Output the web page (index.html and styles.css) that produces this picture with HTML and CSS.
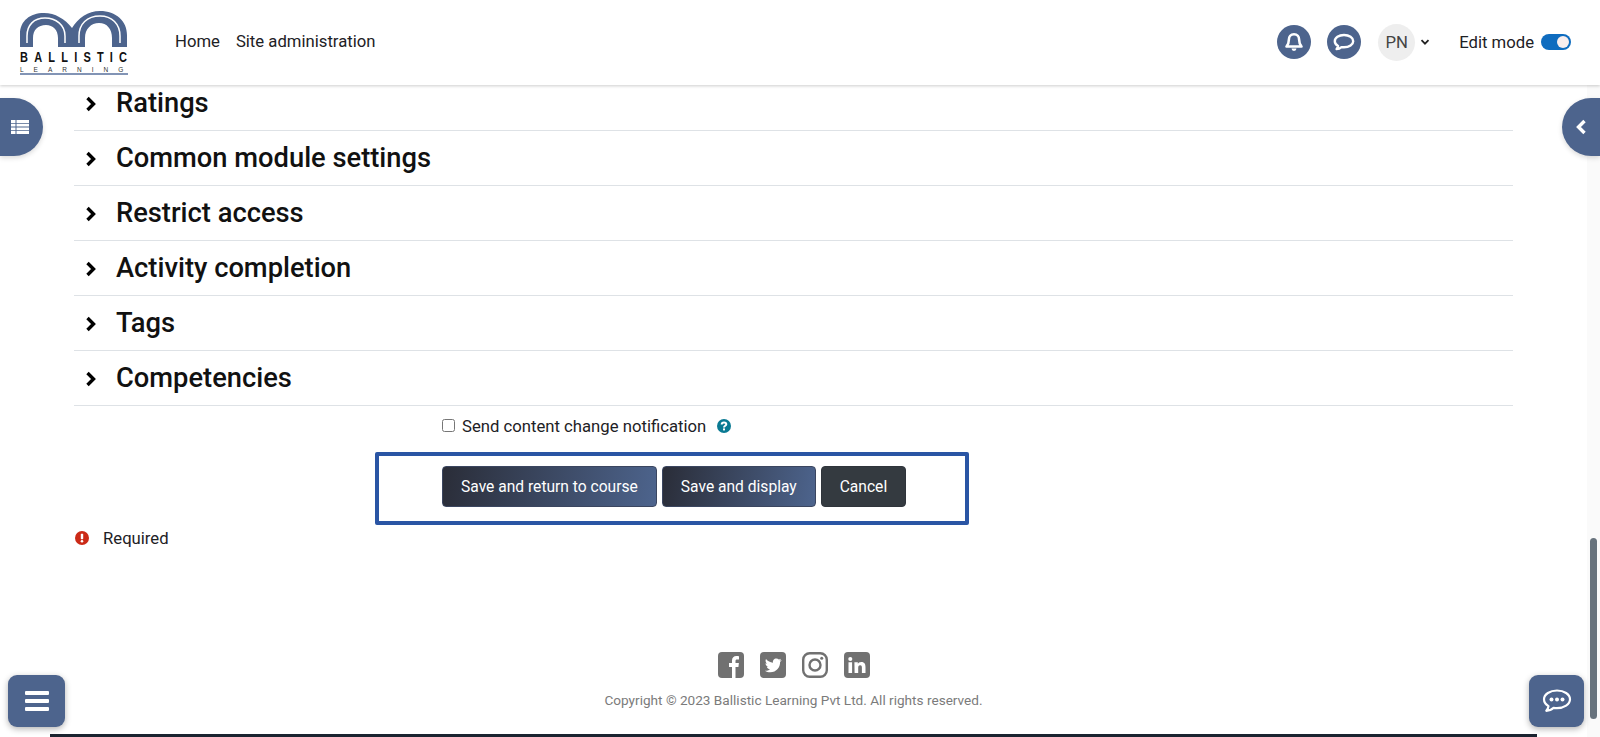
FILE: index.html
```html
<!DOCTYPE html>
<html lang="en">
<head>
<meta charset="utf-8">
<title>Ballistic Learning</title>
<link rel="stylesheet" href="styles.css">
</head>
<body>
<header class="topbar">
  <div class="logo">
    <svg class="logo-arches" viewBox="0 -1 108 38" width="108" height="38">
      <path fill="#4d648d" d="M0 37V24C0 11 10 3 24 3C35 3 45 9 52 18C58 8 68 1 80 1C96 1 107 11 107 25V37H92V28C92 19 87 13 79 13C71 13 65 19 65 28V37H38V28C38 20 33 15 26 15C18 15 13 20 13 28V37Z"/>
      <path fill="none" stroke="#fff" stroke-width="1.500" d="M7 33V26C7 15 14 8 25 8C36 8 45 15 45 26V33"/>
      <path fill="none" stroke="#fff" stroke-width="1.500" d="M59 33V26C59 14 67 6 80 6C92 6 100 14 100 26V33"/>
    </svg>
    <div class="logo-main">BALLISTIC</div>
    <div class="logo-sub">LEARNING</div>
  </div>
  <nav class="nav">
    <a class="nav-link">Home</a>
    <a class="nav-link">Site administration</a>
  </nav>
  <div class="usernav">
    <span class="round-btn">
      <svg viewBox="0 0 24 24" width="22" height="22"><path fill="none" stroke="#fff" stroke-width="2.800" stroke-linejoin="round" d="M12 3.500c-3.600 0-5.600 2.600-5.600 6 0 4.200-1 5.600-2.600 7.400h16.400c-1.600-1.800-2.600-3.200-2.600-7.400 0-3.400-2-6-5.600-6z"/><path fill="#fff" d="M9.300 19h5.400a2.700 2.700 0 0 1-5.400 0z"/></svg>
    </span>
    <span class="round-btn chat-btn">
      <svg viewBox="0 0 24 24" width="24" height="24"><path fill="none" stroke="#fff" stroke-width="2.400" stroke-linejoin="round" d="M12 5C6.800 5 2.800 7.700 2.800 11.200c0 2 1.300 3.700 3.300 4.800-.2 1.200-.8 2.200-1.500 3 2 0 3.700-.8 4.900-1.900.8.100 1.600.2 2.500.2 5.200 0 9.200-2.700 9.200-6.100S17.200 5 12 5z"/></svg>
    </span>
    <span class="avatar">PN</span>
    <svg class="caret" viewBox="0 0 10 10" width="10" height="10"><path fill="none" stroke="#222" stroke-width="1.800" d="M1.500 3.200L5 6.700l3.500-3.500"/></svg>
    <span class="edit-label">Edit mode</span>
    <span class="switch"><span class="knob"></span></span>
  </div>
</header>

<main class="content">
  <section class="acc-row"><svg class="chev" viewBox="0 0 12 16" width="12" height="16"><path fill="none" stroke="#000" stroke-width="3.400" d="M2.500 2l6 6-6 6"/></svg><h3 class="acc-title">Ratings</h3></section>
  <section class="acc-row"><svg class="chev" viewBox="0 0 12 16" width="12" height="16"><path fill="none" stroke="#000" stroke-width="3.400" d="M2.500 2l6 6-6 6"/></svg><h3 class="acc-title">Common module settings</h3></section>
  <section class="acc-row"><svg class="chev" viewBox="0 0 12 16" width="12" height="16"><path fill="none" stroke="#000" stroke-width="3.400" d="M2.500 2l6 6-6 6"/></svg><h3 class="acc-title">Restrict access</h3></section>
  <section class="acc-row"><svg class="chev" viewBox="0 0 12 16" width="12" height="16"><path fill="none" stroke="#000" stroke-width="3.400" d="M2.500 2l6 6-6 6"/></svg><h3 class="acc-title">Activity completion</h3></section>
  <section class="acc-row"><svg class="chev" viewBox="0 0 12 16" width="12" height="16"><path fill="none" stroke="#000" stroke-width="3.400" d="M2.500 2l6 6-6 6"/></svg><h3 class="acc-title">Tags</h3></section>
  <section class="acc-row"><svg class="chev" viewBox="0 0 12 16" width="12" height="16"><path fill="none" stroke="#000" stroke-width="3.400" d="M2.500 2l6 6-6 6"/></svg><h3 class="acc-title">Competencies</h3></section>

  <div class="notify">
    <span class="checkbox"></span>
    <span class="notify-label">Send content change notification</span>
    <svg class="help" viewBox="0 0 14 14" width="14" height="14"><circle cx="7" cy="7" r="7" fill="#0a7a93"/><path fill="none" stroke="#fff" stroke-width="2" d="M4.700 5.500c0-1.400 1-2.100 2.300-2.100s2.300.7 2.300 1.900c0 1.500-2.300 1.500-2.300 3.100"/><rect x="6" y="9.400" width="2" height="2" fill="#fff"/></svg>
  </div>

  <div class="actions-wrap">
    <div class="actions">
      <button class="btn btn-grad">Save and return to course</button>
      <button class="btn btn-grad">Save and display</button>
      <button class="btn btn-dark">Cancel</button>
    </div>
  </div>

  <div class="required">
    <svg viewBox="0 0 14 14" width="14" height="14"><circle cx="7" cy="7" r="7" fill="#cb2a17"/><rect x="5.800" y="2.800" width="2.400" height="5.400" rx=".6" fill="#fff"/><circle cx="7" cy="10.300" r="1.300" fill="#fff"/></svg>
    <span>Required</span>
  </div>

  <footer class="footer">
    <div class="socials">
      <svg viewBox="0 0 26 26" width="26" height="26"><rect width="26" height="26" rx="4" fill="#717171"/><path fill="#fff" d="M14 26V15h-3v-4h3V8.500C14 5.500 15.800 4 18.400 4c1.200 0 2.200.1 2.600.2v3.400h-1.800c-1.400 0-1.700.7-1.700 1.700V11h3.400l-.5 4h-2.900v11z"/></svg>
      <svg viewBox="0 0 26 26" width="26" height="26"><rect width="26" height="26" rx="4" fill="#717171"/><path fill="#fff" d="M21.500 8.100c-.6.300-1.300.5-2 .6.700-.4 1.300-1.100 1.500-1.900-.7.400-1.400.7-2.200.8-.6-.7-1.500-1.100-2.500-1.100-2.200 0-3.800 2-3.300 4.200-2.800-.1-5.300-1.500-7-3.600-.9 1.600-.4 3.600 1.100 4.600-.6 0-1.100-.2-1.600-.4 0 1.700 1.200 3.100 2.800 3.400-.5.100-1 .2-1.500.1.400 1.400 1.700 2.400 3.200 2.400-1.500 1.200-3.300 1.700-5.100 1.500 1.600 1 3.400 1.600 5.300 1.600 6.400 0 10.100-5.400 9.900-10.300.6-.5 1.200-1.200 1.600-1.900z"/></svg>
      <svg viewBox="0 0 26 26" width="26" height="26"><rect x="1.200" y="1.200" width="23.600" height="23.600" rx="6.500" fill="none" stroke="#717171" stroke-width="2.400"/><circle cx="13" cy="13" r="5.500" fill="none" stroke="#717171" stroke-width="2.400"/><circle cx="19.700" cy="6.300" r="1.500" fill="#717171"/></svg>
      <svg viewBox="0 0 26 26" width="26" height="26"><rect width="26" height="26" rx="4" fill="#717171"/><path fill="#fff" d="M4.500 10.200h3.600V21H4.500zM6.300 5a2 2 0 1 1 0 4.100 2 2 0 0 1 0-4.100zM10.400 10.200h3.400v1.500c.5-.9 1.700-1.800 3.400-1.800 3.600 0 4.300 2.400 4.300 5.400V21h-3.600v-5c0-1.200 0-2.800-1.700-2.800s-2 1.300-2 2.700V21h-3.600z"/></svg>
    </div>
    <p class="copyright">Copyright © 2023 Ballistic Learning Pvt Ltd. All rights reserved.</p>
  </footer>
  <div class="bottom-line"></div>
</main>

<div class="drawer-tab drawer-left">
  <svg viewBox="0 0 18 16" width="18" height="16"><path fill="#fff" d="M0 1h4.500v2.900H0zM5.500 1H18v2.900H5.500zM0 4.700h4.500v2.900H0zM5.500 4.700H18v2.900H5.500zM0 8.400h4.500v2.900H0zM5.500 8.400H18v2.900H5.500zM0 12.100h4.500v2.900H0zM5.500 12.100H18v2.900H5.500z"/></svg>
</div>
<div class="drawer-tab drawer-right">
  <svg viewBox="0 0 12 16" width="12" height="16"><path fill="none" stroke="#fff" stroke-width="3.400" d="M9.500 2l-6 6 6 6"/></svg>
</div>
<div class="square-btn square-left">
  <svg viewBox="0 0 24 20" width="24" height="20"><path fill="#fff" d="M1 0h22a1 1 0 0 1 1 1v2a1 1 0 0 1-1 1H1a1 1 0 0 1-1-1V1a1 1 0 0 1 1-1zM1 8h22a1 1 0 0 1 1 1v2a1 1 0 0 1-1 1H1a1 1 0 0 1-1-1V9a1 1 0 0 1 1-1zM1 16h22a1 1 0 0 1 1 1v2a1 1 0 0 1-1 1H1a1 1 0 0 1-1-1v-2a1 1 0 0 1 1-1z"/></svg>
</div>
<div class="square-btn square-right">
  <svg viewBox="0 0 30 26" width="30" height="26"><path fill="none" stroke="#fff" stroke-width="2.200" stroke-linejoin="round" d="M15 2.500C8 2.500 2 6.200 2 11.300c0 2.800 1.800 5.200 4.500 6.800-.2 1.800-1 3.400-2.200 4.700 3 0 5.500-1.200 7.300-3 1.100.2 2.200.3 3.400.3 7 0 13-3.700 13-8.800S22 2.500 15 2.500z"/><circle cx="9.500" cy="11.500" r="2" fill="#fff"/><circle cx="15" cy="11.500" r="2" fill="#fff"/><circle cx="20.500" cy="11.500" r="2" fill="#fff"/></svg>
</div>
<div class="scroll-track"><div class="scroll-thumb"></div></div>
</body>
</html>
```
FILE: styles.css
```css
* { box-sizing: border-box; }
html, body { margin: 0; height: 737px; overflow: hidden; }
body { font-family: Roboto, "Liberation Sans", sans-serif; color: #1d2125; background: #fff; font-size: 16.7px; position: relative; }

.topbar { height: 85px; display: flex; align-items: center; background: #fff; box-shadow: 0 1px 3px rgba(0,0,0,.2); padding: 0 29px 0 20px; position: relative; z-index: 2; }
.logo { width: 108px; height: 66px; margin-top: -1px; display: flex; flex-direction: column; }
.logo-arches { display: block; flex: none; }
.logo-main { font: 700 11px/11px "Liberation Sans", sans-serif; color: #111; letter-spacing: 6.200px; white-space: nowrap; margin-top: 5px; transform: scaleY(1.400); }
.logo-sub { font: 400 6.500px/7px "Liberation Sans", sans-serif; color: #333; letter-spacing: 10px; white-space: nowrap; border-bottom: 2px solid #8294b5; height: 10px; margin-top: 3px; width: 108px; }
.nav { display: flex; gap: 16px; margin-left: 47px; margin-top: -2px; }
.nav-link { color: #1d2125; }
.usernav { margin-left: auto; display: flex; align-items: center; margin-top: -1px; }
.round-btn { width: 34px; height: 34px; border-radius: 50%; background: #4d648d; display: flex; align-items: center; justify-content: center; margin-right: 16px; }
.avatar { width: 37px; height: 37px; border-radius: 50%; background: #eee; display: flex; align-items: center; justify-content: center; color: #444; margin-left: 1px; }
.caret { margin-left: 5px; }
.edit-label { margin-left: 29px; color: #1d2125; }
.switch { width: 30px; height: 16px; border-radius: 8px; background: #0f6cbf; margin-left: 7px; position: relative; display: block; }
.knob { position: absolute; right: 2px; top: 2px; width: 12px; height: 12px; border-radius: 50%; background: #f8eeee; }

.content { padding: 0 87px 0 74px; position: relative; }
.acc-row { height: 55px; margin: 0; display: flex; align-items: center; border-bottom: 1px solid #dee2e6; padding-left: 11px; padding-top: 1px; }
.acc-row:first-child { height: 46px; padding-top: 0; padding-bottom: 8px; }
.chev { flex: none; }
.acc-title { margin: 0 0 0 19px; font-size: 27.300px; font-weight: 500; color: #111; line-height: 1.2; }

.notify { margin-left: 368px; height: 46px; display: flex; align-items: center; padding-bottom: 5px; }
.checkbox { width: 13px; height: 13px; border: 1px solid #767676; border-radius: 2.500px; margin-top: -2px; background: #fff; }
.notify-label { margin-left: 7px; color: #1d2125; }
.help { margin-left: 11px; margin-top: -2px; }

.actions-wrap { margin-left: 301px; width: 594px; height: 73px; border: 4px solid #2a55a4; border-radius: 2px; padding: 10px 0 0 63px; }
.actions { display: flex; gap: 5px; }
.btn { height: 41px; border: 1px solid #2f343b; border-radius: 4px; color: #fff; font: 400 15.600px Roboto, sans-serif; padding: 0 18px; }
.btn-grad { background: linear-gradient(100deg, #2a2d38, #4d648d); border-color: #3b4660; }
.btn-dark { background: #343a40; }

.required { display: flex; align-items: center; margin-top: 1px; margin-left: 1px; height: 24px; color: #1d2125; }
.required span { margin-left: 14px; }

.footer { position: absolute; top: 567px; left: 0; width: 1587px; text-align: center; }
.socials { display: flex; justify-content: center; gap: 16px; }
.copyright { margin: 11px 0 0; font-size: 13.600px; color: #7b7b7b; line-height: 22px; }
.bottom-line { position: absolute; top: 649px; left: 50px; width: 1487px; height: 3px; background: #1b2430; }

.drawer-tab { position: absolute; top: 98px; width: 43px; height: 58px; background: #4d648d; display: flex; align-items: center; justify-content: center; box-shadow: 0 2px 5px rgba(0,0,0,.15); z-index: 1; }
.drawer-left { left: 0; border-radius: 0 29px 29px 0; padding-right: 4px; }
.drawer-right { left: 1562px; width: 38px; border-radius: 29px 0 0 29px; }
.square-btn { position: absolute; top: 675px; height: 52px; background: #4d648d; border-radius: 9px; display: flex; align-items: center; justify-content: center; box-shadow: 0 2px 6px rgba(0,0,0,.3); z-index: 3; }
.square-left { left: 8px; width: 57px; }
.square-right { left: 1529px; width: 55px; }
.scroll-track { position: absolute; top: 85px; left: 1587px; width: 13px; height: 652px; background: #fafafa; }
.scroll-thumb { position: absolute; top: 453px; left: 3px; width: 7px; height: 181px; border-radius: 4px; background: #68737d; }
```
